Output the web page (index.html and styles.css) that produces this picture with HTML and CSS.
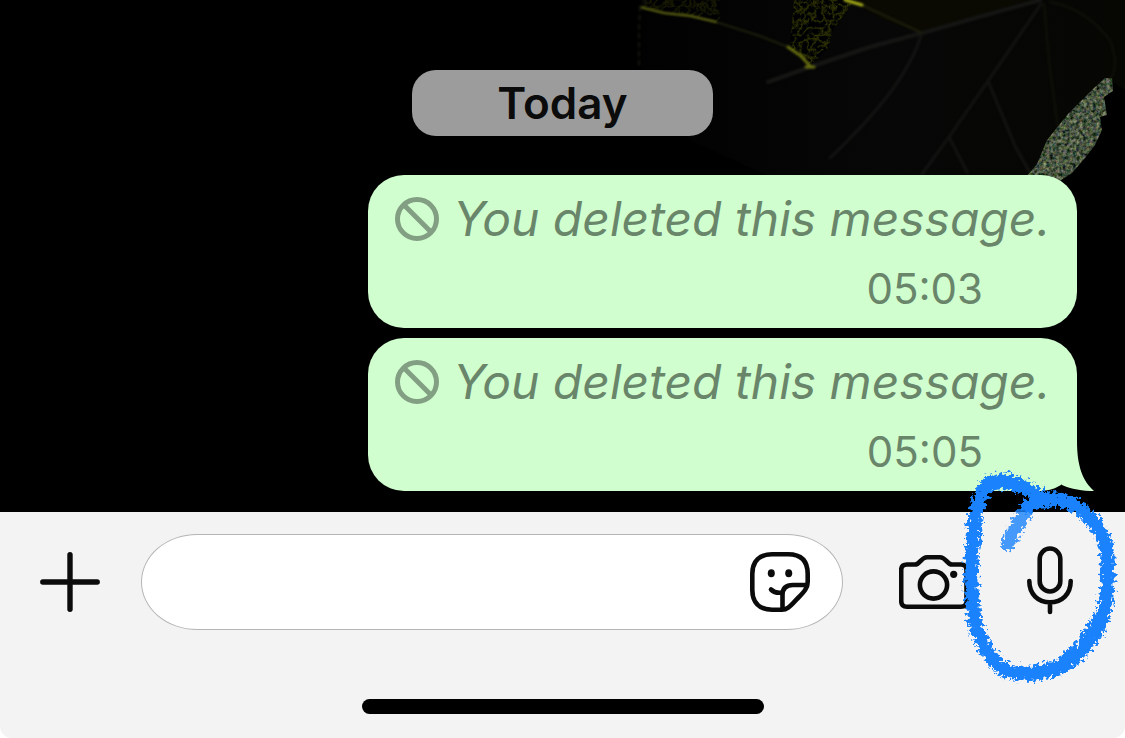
FILE: index.html
```html
<!DOCTYPE html>
<html lang="en">

<head>
    <meta charset="utf-8">
    <meta name="viewport" content="width=device-width, initial-scale=1">
    <title>Chat</title>
    <link rel="stylesheet" href="styles.css">
</head>

<body>
    <main class="chat">
        <!-- Wallpaper: dark leaf in the corner -->
        <svg class="wallpaper" viewBox="0 0 495 190" width="495" height="190" aria-hidden="true">
            <defs>
                <filter id="speckle" x="0" y="0" width="100%" height="100%" color-interpolation-filters="sRGB">
                    <feTurbulence type="fractalNoise" baseFrequency="0.3" numOctaves="3" seed="4" />
                    <feColorMatrix values="0.8 0.2 0 0 -0.22  0.6 0.4 0 0 -0.17  0.5 0.2 0.3 0 -0.25  0 0 0 0 1" />
                    <feComposite in2="SourceGraphic" operator="in" />
                    <feGaussianBlur stdDeviation="0.4" />
                </filter>
                <filter id="veins" x="0" y="0" width="100%" height="100%" color-interpolation-filters="sRGB">
                    <feTurbulence type="turbulence" baseFrequency="0.14" numOctaves="3" seed="8" />
                    <feColorMatrix values="-0.6 0 0 0 0.22  -0.6 0 0 0 0.23  0 0 0 0 0.01  0 0 0 0 1" />
                    <feComposite in2="SourceGraphic" operator="in" />
                    <feGaussianBlur stdDeviation="0.6" />
                </filter>
                <filter id="soft" color-interpolation-filters="sRGB">
                    <feGaussianBlur stdDeviation="0.8" />
                </filter>
                <linearGradient id="leafShade" x1="0" y1="0" x2="1" y2="0">
                    <stop offset="0" stop-color="#010101" />
                    <stop offset="0.5" stop-color="#070707" />
                    <stop offset="1" stop-color="#060603" />
                </linearGradient>
            </defs>
            <path d="M9 0H495V90L480 80L470 85L430 125L395 190H170L60 140L9 70Z" fill="url(#leafShade)" />
            <path d="M164 0H225Q214 14 203 30L198 48L180 66L160 48Z" filter="url(#veins)" />
            <path d="M12 0H90V22L50 14L11 7Z" opacity="0.5" filter="url(#veins)" />
            <path d="M225 0H400L290 32Q240 18 225 0Z" fill="#0a0a02" />
            <g fill="none" stroke-linecap="round" filter="url(#soft)">
                <path d="M138 82L180 67L240 47L292 33L345 18L410 0" stroke="#161614" stroke-width="4" />
                <path d="M292 33Q284 60 262 90T200 158M411 4L358 81L319 137L292 174M358 81L386 148L402 176M319 137L337 172" stroke="#131312" stroke-width="3" />
                <path d="M414 4L420 70L428 128M420 2Q455 8 480 40Q492 70 475 85" stroke="#11120a" stroke-width="2" />
                <path d="M86 22L130 36L158 47M232 5L292 33" stroke="#1e1f0d" stroke-width="2" />
                <path d="M10 7L34 13L61 16L86 22" stroke="#666c14" stroke-width="2" />
                <path d="M158 47L171 56L180 66M176 67L184 67" stroke="#666d10" stroke-width="3" />
                <path d="M215 0L232 5" stroke="#a5ab18" stroke-width="3" />
                <path d="M16 0L10 7L9 30V68" stroke="#15160d" stroke-width="2" stroke-dasharray="4 5" />
            </g>
            <path d="M482 78L483 91L474 97L477 115L470 117L472 130L465 145L455 158L442 173L425 184H390L407 164L417 140L438 114L464 88L475 78Z" filter="url(#speckle)" />
        </svg>

        <h1 class="day">Today</h1>

        <article class="bubble">
            <p class="message">
                <svg class="ban" viewBox="0 0 46 46" aria-hidden="true">
                    <circle cx="23" cy="23" r="19.5" />
                    <path d="M10 9L37 36" />
                </svg>
                You deleted this message.
            </p>
            <time class="time">05:03</time>
        </article>

        <article class="bubble">
            <p class="message">
                <svg class="ban" viewBox="0 0 46 46" aria-hidden="true">
                    <circle cx="23" cy="23" r="19.5" />
                    <path d="M10 9L37 36" />
                </svg>
                You deleted this message.
            </p>
            <time class="time">05:05</time>
            <svg class="tail" viewBox="0 0 60 60" aria-hidden="true">
                <path d="M40 10C40 36 46 50 57 60C46 60 34 58 25 54L20 30Z" />
            </svg>
        </article>
    </main>

    <footer class="composer">
        <form class="toolbar">
            <button class="icon-btn" type="button" aria-label="Attach">
                <svg class="icon plus" viewBox="0 0 60 60" width="60" height="60">
                    <path d="M30 2.8V57.2M2.8 30H57.2" />
                </svg>
            </button>

            <div class="field">
                <input class="field-input" type="text" aria-label="Message">
                <button class="icon-btn" type="button" aria-label="Stickers">
                    <svg class="icon" viewBox="0 0 60 60" width="60" height="60">
                        <path d="M32 57.7H22C9 57.7 2.3 50 2.3 38V22C2.3 9 10 2.3 22 2.3H38C51 2.3 57.7 9 57.7 22V30C57.7 36 54 40 48 46C41 53 38 57.7 32 57.7Z" />
                        <path d="M32.5 57V43Q32.5 33 43 33H57" />
                        <path d="M21 37.5Q25 41.5 32 40.5" />
                        <g class="solid">
                            <ellipse cx="21.3" cy="21.3" rx="3.5" ry="4" />
                            <ellipse cx="38.7" cy="21.3" rx="3.5" ry="4" />
                        </g>
                    </svg>
                </button>
            </div>

            <div class="actions">
                <button class="icon-btn" type="button" aria-label="Camera">
                    <svg class="icon" viewBox="0 0 70 60" width="70" height="60">
                        <path d="M8 12.5H16C21 12.5 22 5.2 28 5.2H41C47 5.2 48 12.5 53 12.5H62Q67.5 12.5 67.5 18V49Q67.5 54.8 62 54.8H8Q2.2 54.8 2.2 49V18Q2.2 12.5 8 12.5Z" />
                        <circle cx="34.5" cy="33" r="13.6" />
                        <circle class="solid" cx="54.7" cy="22.3" r="3.6" />
                    </svg>
                </button>
                <button class="icon-btn" type="button" aria-label="Record voice message">
                    <svg class="icon" viewBox="0 0 46 72" width="46" height="72">
                        <rect x="12.7" y="2.5" width="20.6" height="43" rx="10.3" />
                        <path d="M2.3 35C2.3 48 11 56.3 23 56.3C35 56.3 43.7 48 43.7 35M23 56.3V66" />
                    </svg>
                </button>
            </div>
        </form>

        <div class="home-bar"></div>

        <!-- Crayon circle drawn around the mic -->
        <svg class="scribble" viewBox="0 0 175 235" width="175" height="235" aria-hidden="true">
            <defs>
                <filter id="crayon" x="-10%" y="-10%" width="120%" height="120%" color-interpolation-filters="sRGB">
                    <feTurbulence type="fractalNoise" baseFrequency="0.3" numOctaves="3" seed="3" result="noise" />
                    <feDisplacementMap in="SourceGraphic" in2="noise" scale="13" xChannelSelector="R" yChannelSelector="G" />
                    <feGaussianBlur stdDeviation="0.7" />
                </filter>
            </defs>
            <g filter="url(#crayon)">
                <path class="faint" d="M57 83L66 67L78 48" />
                <path d="M78 46C87 40 99 38 111 40C131 44 148 65 155 81C159 96 159 135 153 156C147 174 133 192 117 203C103 214 71 217 55 210C39 200 25 173 24 153C20 127 21 96 24 73C26 47 30 30 40 24C60 18 75 25 96 41" />
                <path d="M38 23L56 20L72 27M148 160L132 188L110 206L86 213" />
            </g>
        </svg>
    </footer>
</body>

</html>
```

FILE: styles.css
```css
* {
    box-sizing: border-box;
}

body {
    background: white;
    display: flex;
    flex-direction: column;
    font-family: Inter, "Liberation Sans", sans-serif;
    margin: 0;
    min-height: 100vh;
}

.chat {
    align-items: flex-end;
    background: black;
    display: flex;
    flex: 1;
    flex-direction: column;
    gap: 10px;
    justify-content: flex-end;
    overflow: hidden;
    padding: 20px 48px 21px;
    position: relative;
}

.wallpaper {
    position: absolute;
    right: 0;
    top: 0;
}

.day {
    align-self: center;
    background: #9c9c9c;
    border-radius: 24px;
    color: #0b0b0b;
    font-size: 44px;
    font-weight: 600;
    line-height: 66px;
    margin: 0 0 29px;
    padding: 0 85px;
    position: relative;
}

.bubble {
    background: #d0fecf;
    border-radius: 36px;
    color: #69856a;
    min-width: 63vw;
    padding: 9px 26px 4px;
    position: relative;
}

.message {
    align-items: center;
    display: flex;
    font-size: 48px;
    font-style: italic;
    gap: 13px;
    line-height: 70px;
    margin: 0;
    white-space: nowrap;
}

.ban {
    fill: none;
    flex: none;
    height: 46px;
    stroke: #839f83;
    stroke-width: 5;
    width: 46px;
}

.time {
    display: block;
    font-size: 42px;
    line-height: 70px;
    padding-right: 68px;
    text-align: right;
}

.tail {
    bottom: 0;
    fill: #d0fecf;
    height: 60px;
    position: absolute;
    right: -20px;
    width: 60px;
}

.composer {
    background: #f3f3f3;
    border-radius: 0 0 12px 12px;
    padding: 22px 0 24px;
    position: relative;
}

.toolbar {
    align-items: center;
    display: flex;
    gap: 41px;
    padding: 0 52px 0 40px;
}

.icon-btn {
    background: none;
    border: none;
    cursor: pointer;
    display: flex;
    flex: none;
    padding: 0;
}

.icon {
    fill: none;
    stroke: #0b0b0b;
    stroke-linecap: round;
    stroke-linejoin: round;
    stroke-width: 4.6;
}

.plus {
    stroke-width: 5.4;
}

.solid {
    fill: #0b0b0b;
    stroke: none;
}

.field {
    align-items: center;
    background: white;
    border: 1px solid #b5b5b5;
    border-radius: 56px / 48px;
    display: flex;
    flex: 1;
    height: 96px;
    min-width: 0;
    padding: 0 32px;
}

.field-input {
    background: none;
    border: none;
    flex: 1;
    font: inherit;
    font-size: 48px;
    min-width: 0;
    outline: none;
}

.actions {
    align-items: center;
    display: flex;
    gap: 58px;
    padding-left: 15px;
}

.home-bar {
    background: black;
    border-radius: 8px;
    height: 15px;
    margin: 69px auto 0;
    width: 402px;
}

.scribble {
    fill: none;
    pointer-events: none;
    position: absolute;
    right: 0;
    stroke: #1982fc;
    stroke-linecap: round;
    stroke-linejoin: round;
    stroke-width: 14;
    top: -52px;
}

.faint {
    opacity: .8;
}
```
